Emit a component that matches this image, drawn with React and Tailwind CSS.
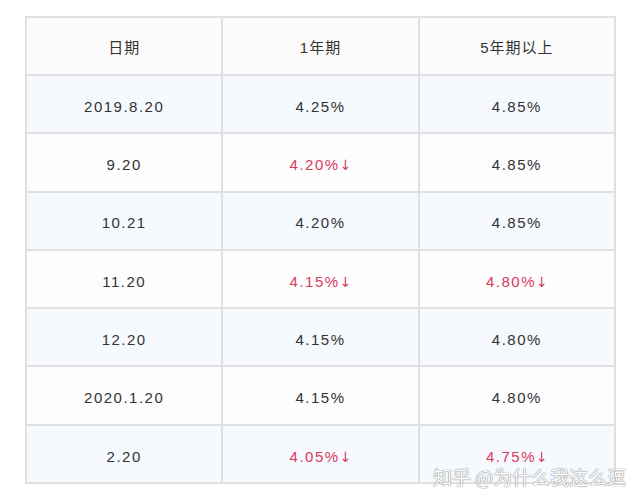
import React from "react";

const rows = [
  { date: "2019.8.20", y1: "4.25%", y5: "4.85%" },
  { date: "9.20", y1: "4.20%", y5: "4.85%", d1: true },
  { date: "10.21", y1: "4.20%", y5: "4.85%" },
  { date: "11.20", y1: "4.15%", y5: "4.80%", d1: true, d5: true },
  { date: "12.20", y1: "4.15%", y5: "4.80%" },
  { date: "2020.1.20", y1: "4.15%", y5: "4.80%" },
  { date: "2.20", y1: "4.05%", y5: "4.75%", d1: true, d5: true },
];

function Cell({ value, down }) {
  return (
    <td className={`border-2 border-[#e0e0e0] text-center tracking-[1.5px] pt-[6px] ${down ? "text-[#d83a5c]" : ""}`}>
      {value}
      {down && <span className="font-['DejaVu_Sans',sans-serif] text-[14px] tracking-normal">↓</span>}
    </td>
  );
}

export default function App() {
  return (
    <div className="relative w-[640px] h-[503px] bg-white pt-[16px] pl-[25px] font-['Liberation_Sans','Noto_Sans_CJK_SC',sans-serif] text-[15px] text-[#333]">
      <table className="w-[591px] table-fixed border-collapse">
        <thead>
          <tr className="h-[58px] bg-[#fbfbfb]">
            <th className="border-2 border-[#e0e0e0] font-normal tracking-[1px] pt-[4px]">日期</th>
            <th className="border-2 border-[#e0e0e0] font-normal tracking-[1px] pt-[4px]">1年期</th>
            <th className="border-2 border-[#e0e0e0] font-normal tracking-[1px] pt-[4px]">5年期以上</th>
          </tr>
        </thead>
        <tbody>
          {rows.map((r, i) => (
            <tr key={r.date} className={`h-[58.3px] ${i % 2 === 0 ? "bg-[#f6f9fd]" : "bg-[#fdfdfd]"}`}>
              <Cell value={r.date} />
              <Cell value={r.y1} down={r.d1} />
              <Cell value={r.y5} down={r.d5} />
            </tr>
          ))}
        </tbody>
      </table>
      <div className="absolute left-[433px] top-[467px] text-[19px] leading-[20px] text-white font-['Noto_Sans_CJK_SC',sans-serif] [text-shadow:0_0_1px_#777,0_0_1px_#777]">
        知乎 @为什么我这么逗
      </div>
    </div>
  );
}
